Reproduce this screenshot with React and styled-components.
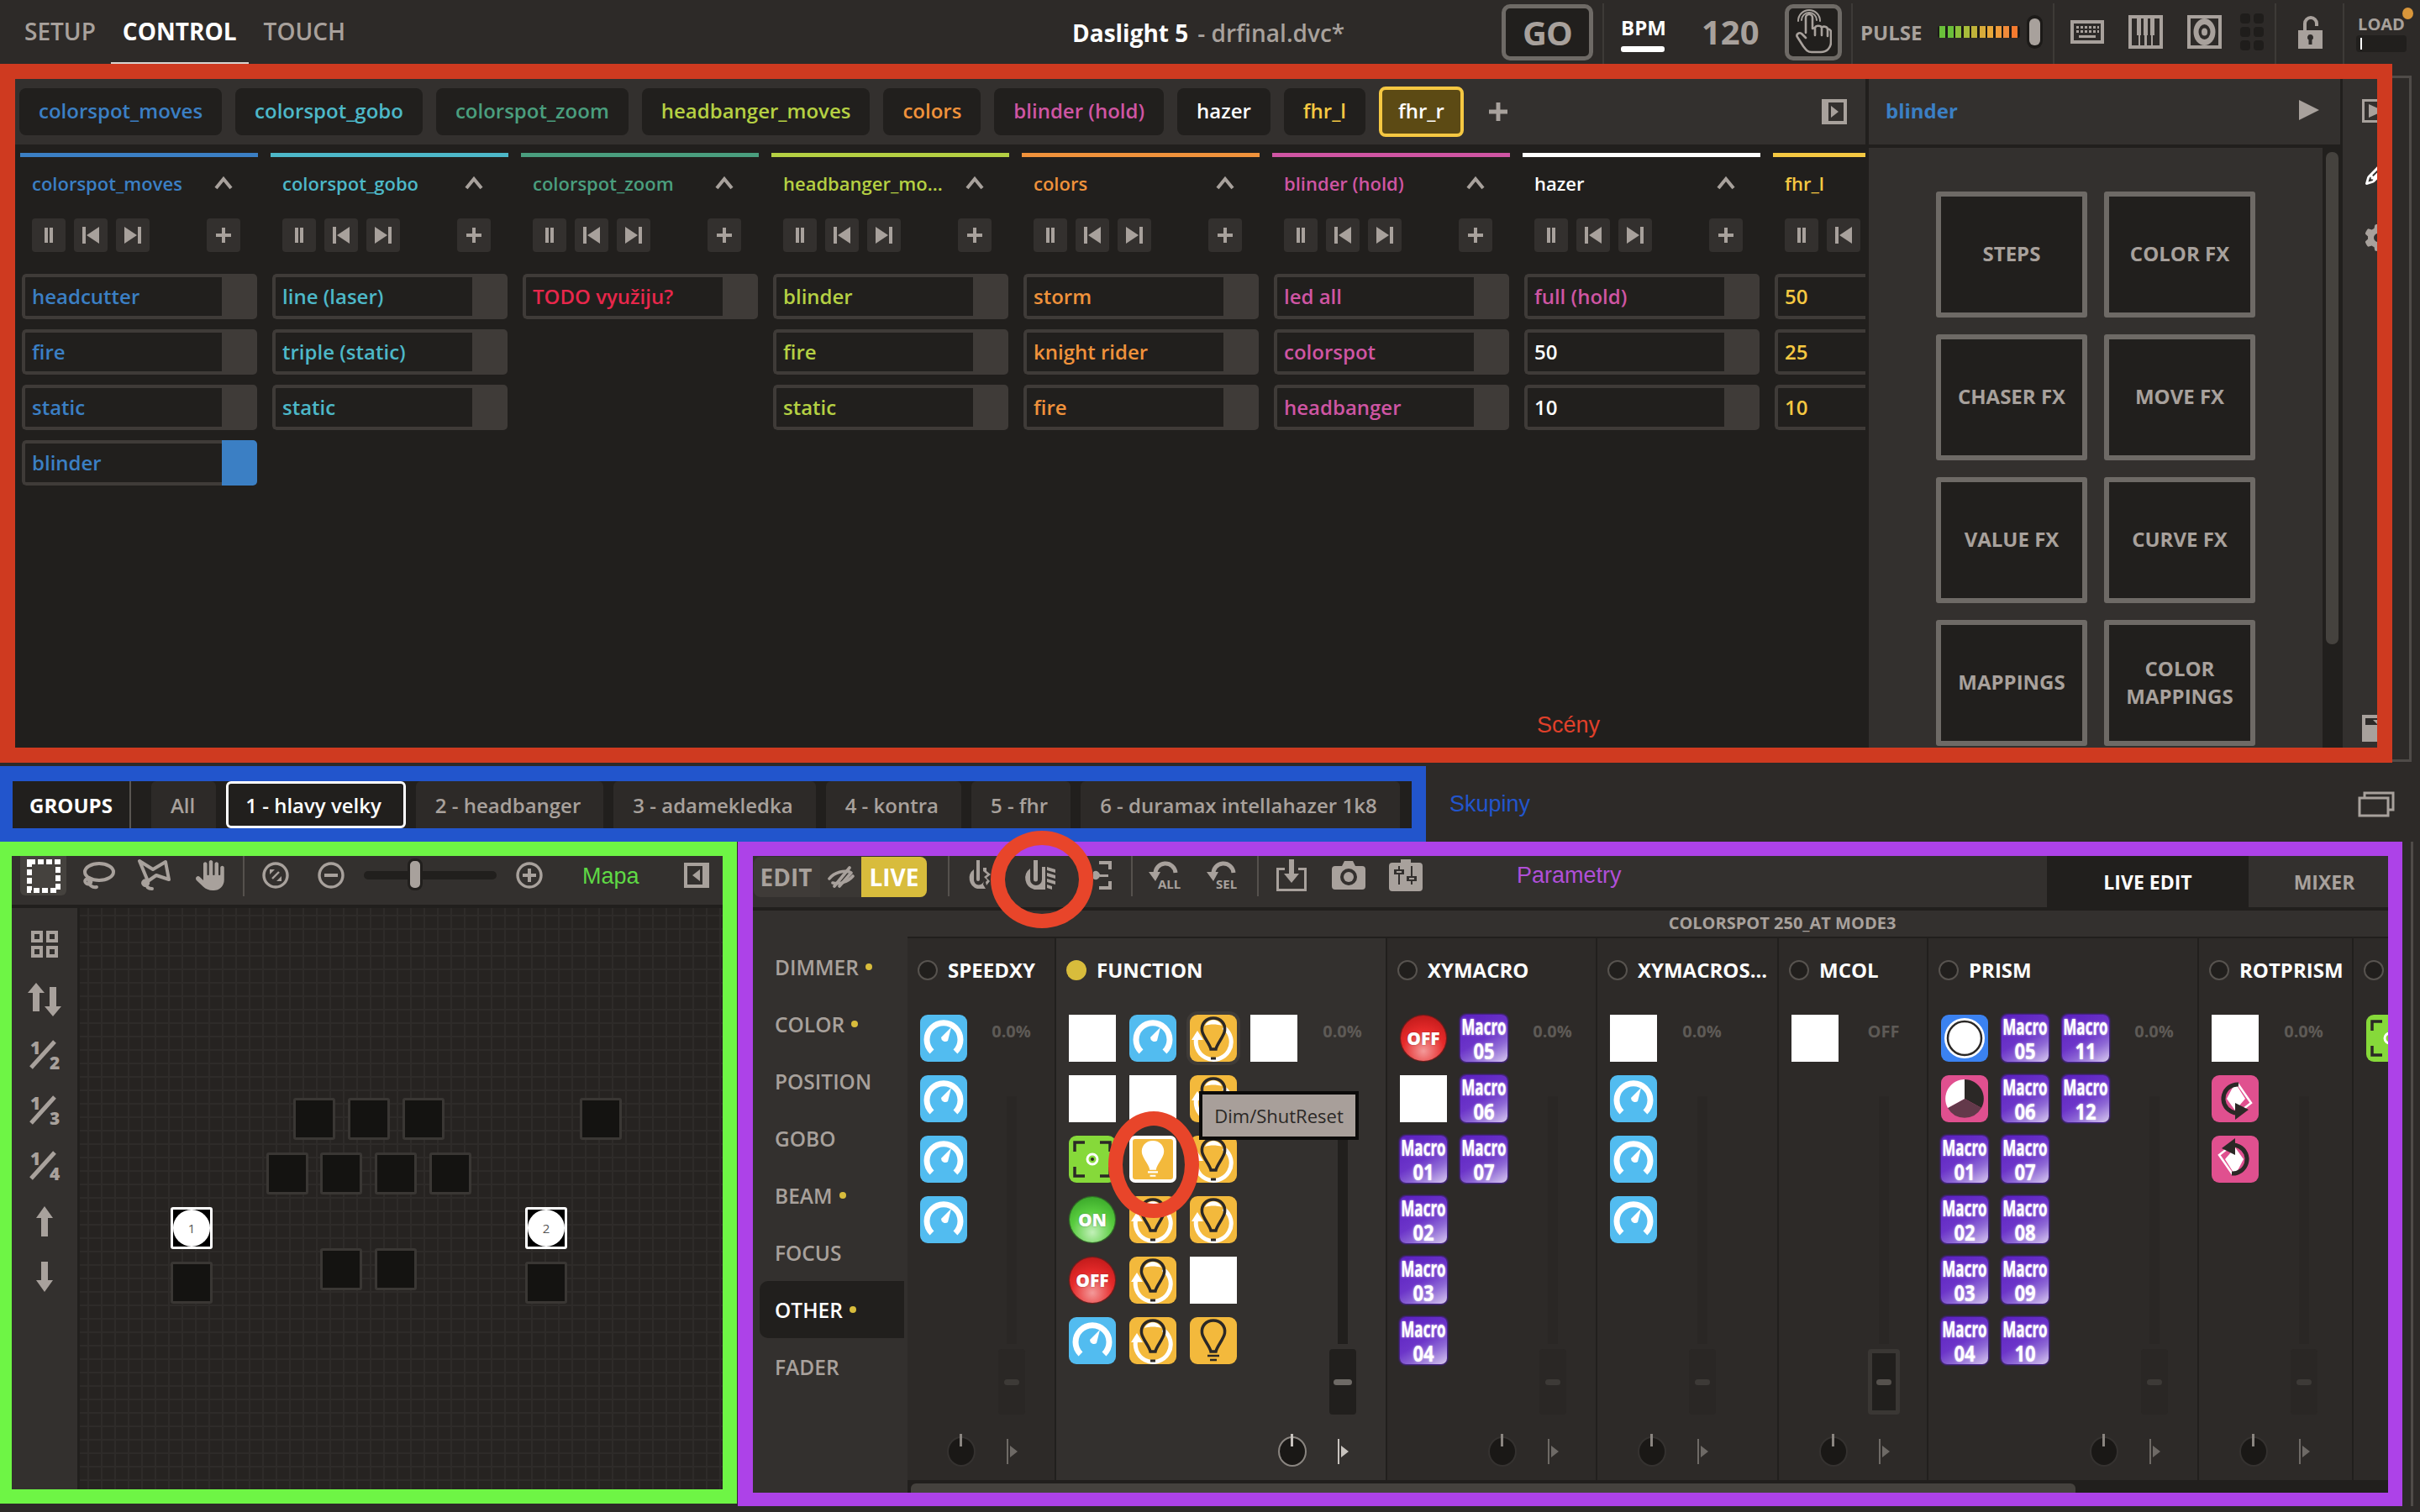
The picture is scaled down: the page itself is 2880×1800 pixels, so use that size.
import React from 'react';
import styled, { createGlobalStyle } from 'styled-components';
import { FaHand, FaGear, FaPencil } from 'react-icons/fa6';

const C = '#a8a19c';
const DARK = '#211f1d';
const MID = '#33302e';
const BASE = '#2d2a28';
const FONT = '"Open Sans", "Noto Sans", sans-serif';

const Global = createGlobalStyle`
  html, body { margin: 0; padding: 0; background: ${BASE}; }
  * { box-sizing: border-box; }
`;

const Page = styled.div`
  position: relative; width: 2880px; height: 1800px; overflow: hidden;
  background: ${BASE}; font-family: ${FONT}; color: ${C};
  display: flex; flex-direction: column;
`;

/* ---------- top bar ---------- */
const TopBar = styled.header`display: flex; height: 76px; flex: none; align-items: stretch;`;
const NavPart = styled.nav`flex: 0 0 1276px; display: flex; padding-left: 15px; gap: 4px;`;
const NavTab = styled.div`
  padding: 0 14px; height: 76px; line-height: 74px; font-size: 28px;
  font-weight: ${p => (p.$on ? 700 : 600)}; color: ${p => (p.$on ? '#fff' : C)};
  border-bottom: 2px solid ${p => (p.$on ? '#d8d4d0' : 'transparent')};
`;
const TitlePart = styled.div`flex: 0 0 511px; font-size: 28px; line-height: 78px; white-space: nowrap; color: ${C}; font-weight: 600;`;
const TitleStrong = styled.span`color: #fff; font-weight: 700;`;
const TitleFile = styled.span`font-size: 28px; margin-left: 11px;`;
const Slot = styled.div`
  flex: 0 0 ${p => p.$w}px; padding-left: ${p => p.$pl || 0}px;
  display: flex; align-items: center;
`;
const TopDivider = styled.div`flex: 0 0 2px; margin-top: 4px; background: #3d3a37;`;
const GoButton = styled.div`
  width: ${p => p.$w}px; height: 67px; border: 5px solid #6e6a66; border-radius: 10px; background: ${DARK};
  display: flex; align-items: center; justify-content: center; color: ${C};
  font-size: 40px; letter-spacing: -1px; font-weight: 700;
`;
const BpmBox = styled.div`display: flex; flex-direction: column; align-items: flex-start; gap: 4px;`;
const BpmLabel = styled.div`font-size: 24px; font-weight: 700; color: #fff; line-height: 36px;`;
const BpmBar = styled.div`width: 52px; height: 7px; border-radius: 3px; background: #fff;`;
const BpmValue = styled.div`font-size: 40px; font-weight: 700; color: ${C}; line-height: 1;`;
const PulseLabel = styled.div`font-size: 24px; font-weight: 700; color: ${C};`;
const Meter = styled.div`
  width: 98px; height: 14px; background: #1c1a18; border-radius: 3px; padding: 0 2px;
  display: flex; gap: 2.5px; align-items: stretch;
`;
const MeterBar = styled.span`flex: 0 0 7px; background: ${p => p.$c};`;
const MeterHandle = styled.div`
  width: 19px; height: 40px; margin-left: 8px; border-radius: 10px; background: #1c1a18;
  display: flex; padding: 4px 3px;
`;
const MeterHandleCore = styled.div`flex: 1; border-radius: 6px; background: ${C};`;
const LoadBox = styled.div`display: flex; flex-direction: column; align-items: stretch; width: 60px; margin-top: 3px;`;
const LoadLabel = styled.div`font-size: 20px; font-weight: 700; color: ${C}; line-height: 22px; text-align: center;`;
const LoadInput = styled.div`height: 20px; margin-top: 2px; background: ${DARK}; border-radius: 4px; padding: 3px 5px;`;
const Caret = styled.div`width: 2px; height: 14px; background: #fff;`;
const OrangeDot = styled.div`
  position: absolute; left: 2859px; top: 9px; width: 13px; height: 14px; border-radius: 50%; background: #d9963a;
`;

/* ---------- scenes section ---------- */
const ScenesRow = styled.div`display: flex; height: 832px; flex: none;`;
const RedFrame = styled.section`
  width: 2847px; height: 832px; border: 18px solid #cf3a20; display: flex; background: ${DARK}; overflow: hidden;
`;
const ScenesMain = styled.div`flex: 0 0 2202px; display: flex; flex-direction: column; min-width: 0;`;
const ScenesTabs = styled.div`
  height: 78px; flex: none; background: ${MID}; display: flex; align-items: center; gap: 16px; padding: 0 22px 0 5px;
`;
const SceneTab = styled.div`
  height: ${p => (p.$on ? 60 : 56)}px; padding: 0 ${p => (p.$on ? 19 : 23)}px 4px; border-radius: 8px;
  background: ${p => (p.$on ? '#5c4a14' : DARK)};
  border: ${p => (p.$on ? '4px solid #f5c842' : 'none')};
  color: ${p => (p.$on ? '#fff' : p.$c)}; font-size: 24px; font-weight: 600;
  display: flex; align-items: center; white-space: nowrap;
`;
const AddTab = styled.div`margin-left: 14px; display: flex;`;
const PushRight = styled.div`margin-left: auto; display: flex;`;
const Columns = styled.div`flex: 1; display: flex; gap: 15px; padding: 10px 0 0 6px; overflow: hidden;`;
const SceneColumn = styled.div`flex: 0 0 283px; display: flex; flex-direction: column;`;
const ColBar = styled.div`height: 5px; flex: none; background: ${p => p.$c};`;
const ColHead = styled.div`
  height: 62px; flex: none; margin-bottom: 11px; padding: 0 29px 0 14px; display: flex; align-items: center;
  justify-content: space-between; color: ${p => p.$c}; font-size: 22px; font-weight: 600;
`;
const Transport = styled.div`display: flex; gap: 10px; padding: 0 21px 0 14px; margin-bottom: 26px; flex: none;`;
const TransportBtn = styled.div`
  width: 40px; height: 40px; border-radius: 4px; background: ${MID};
  display: flex; align-items: center; justify-content: center;
  margin-left: ${p => (p.$end ? 'auto' : 0)};
`;
const CueList = styled.div`display: flex; flex-direction: column; gap: 12px; margin-left: 2px;`;
const CueRow = styled.div`display: flex; width: 280px; height: 54px; border-radius: 5px; overflow: hidden;`;
const CueName = styled.div`
  flex: 0 0 238px; border: 4px solid #3f3b38; border-right: 0; background: ${DARK}; padding-left: 8px;
  color: ${p => p.$c}; font-size: 24px; font-weight: 600; line-height: 45px; white-space: nowrap;
  border-radius: 5px 0 0 5px;
`;
const CueState = styled.div`flex: 1; background: ${p => p.$c || '#3f3b38'};`;

const InfoPanel = styled.aside`flex: 0 0 568px; display: flex; flex-direction: column; border-left: 4px solid ${DARK}; border-right: 3px solid ${DARK};`;
const InfoHead = styled.div`
  height: 78px; flex: none; background: ${MID}; display: flex; align-items: center; justify-content: space-between;
  padding: 0 25px 4px 20px; color: #3b7fc4; font-size: 24px; font-weight: 700;
`;
const InfoBody = styled.div`flex: 1; display: flex; margin-top: 4px; min-height: 0;`;
const FxArea = styled.div`
  flex: 0 0 540px; background: ${MID}; padding: 52px 0 0 80px; display: grid;
  grid-template-columns: 180px 180px; grid-auto-rows: 150px; gap: 20px; overflow: hidden; align-content: start;
`;
const FxButton = styled.div`
  border: 6px solid #6e6a66; border-radius: 3px; background: ${DARK}; color: ${C}; padding-bottom: 3px;
  display: flex; align-items: center; justify-content: center; text-align: center;
  font-size: 24px; font-weight: 700; line-height: 33px;
`;
const ScrollGutter = styled.div`flex: 1; background: ${DARK}; padding: 5px 2px 0 4px;`;
const ScrollThumb = styled.div`height: 586px; border-radius: 7px; background: #45423e;`;
const SideStrip = styled.div`
  flex: 1; background: ${MID}; overflow: hidden; display: flex; flex-direction: column;
  padding: 24px 0 7px 23px;
`;
const StripItem = styled.div`margin: ${p => p.$mt || 0}px 0 0 ${p => p.$ml || 0}px; width: 34px; flex: none; display: flex;`;
const Gutter = styled.div`
  flex: 0 0 23px; margin: 14px 0 1px 0; border: 3px solid #4f4b48; border-left: 0;
`;
const SideGutter = styled.div`flex: 0 0 13px; margin-bottom: 7px; border-right: 3px solid #4f4b48;`;
const FloatLabel = styled.div`
  position: absolute; left: ${p => p.$x}px; top: ${p => p.$y}px; color: ${p => p.$c};
  font: 27px "Liberation Sans", Arial, sans-serif;
`;

/* ---------- groups ---------- */
const GroupsRow = styled.div`display: flex; height: 90px; margin-top: 4px; flex: none; align-items: stretch;`;
const BlueFrame = styled.section`
  flex: 0 0 1697px; min-width: 0; border: solid #2255cc; border-width: 18px 17px 16px 15px; background: ${DARK}; display: flex; gap: 12px; overflow: hidden;
`;
const GroupsTitle = styled.div`
  flex: 0 0 141px; border-right: 2px solid #5a5652; margin-right: 12px; color: #fff; font-size: 24px; font-weight: 700;
  display: flex; align-items: center; justify-content: center;
`;
const GroupTab = styled.div`
  padding: 0 ${p => (p.$on ? 26 : p.$pr || 27)}px 0 ${p => (p.$on ? 20 : 23)}px;
  background: ${p => (p.$on ? DARK : BASE)}; color: ${p => (p.$on ? '#fff' : C)};
  border: ${p => (p.$on ? '3px solid #fff' : 'none')}; border-radius: 6px 6px ${p => (p.$on ? '6px 6px' : '0 0')};
  font-size: 24px; font-weight: 600; display: flex; align-items: center; white-space: nowrap;
`;
const SkupinyLabel = styled.div`margin-left: 28px; display: flex; align-items: center; color: #2255cc; font: 27px "Liberation Sans", Arial, sans-serif;`;
const WindowsIcon = styled.div`margin: 0 30px 0 auto; display: flex; align-items: center;`;

/* ---------- bottom ---------- */
const BottomRow = styled.div`display: flex; flex: none; height: 798px;`;
const GreenFrame = styled.section`
  flex: 0 0 877px; height: 788px; border: solid #6ef545; border-width: 17px 17px 17px 14px; margin-right: 1px;
  display: flex; flex-direction: column; background: ${DARK};
`;
const MapToolbar = styled.div`height: 62px; flex: none; display: flex; align-items: flex-start; background: ${MID}; border-bottom: 4px solid ${DARK};`;
const MapIcon = styled.div`
  flex: none; margin-left: ${p => p.$ml || 0}px; width: ${p => p.$w}px; height: 46px; display: flex; align-items: center; justify-content: center;
`;
const SelectWrap = styled.div`
  flex: none; margin-left: 10px; width: 55px; height: 47px; background: #45423e; border-radius: 0 0 6px 6px;
  display: flex; align-items: center; justify-content: center;
`;
const ToolDivider = styled.div`flex: none; margin-left: ${p => p.$ml}px; width: 2px; height: ${p => p.$h || 48}px; background: #55514d;`;
const ZoomSlider = styled.div`position: relative; flex: none; margin: 18px 0 0 23px; width: 158px; height: 10px; border-radius: 5px; background: ${DARK};`;
const ZoomHandle = styled.div`
  position: absolute; left: 52px; top: -15px; width: 18px; height: 38px; border-radius: 8px; background: ${C}; border: 3px solid ${DARK};
`;
const MapaLabel = styled.div`margin-left: 47px; margin-top: 9px; color: #5fd945; font: 27px "Liberation Sans", Arial, sans-serif;`;
const CollapseSlot = styled.div`margin: 8px 16px 0 auto; display: flex;`;
const MapBody = styled.div`flex: 1; display: flex; min-height: 0;`;
const MapSide = styled.div`flex: 0 0 78px; background: ${MID}; padding-top: 10px; display: flex; flex-direction: column; align-items: center;`;
const MapSideItem = styled.div`height: 66px; display: flex; align-items: center; justify-content: center; flex: none;`;
const FractionBox = styled.div`position: relative; width: 36px; height: 36px;`;
const FractionDigit = styled.span`
  position: absolute; font-size: 21px; font-weight: 800; line-height: 20px; color: ${C};
  left: ${p => (p.$den ? 24 : 1)}px; top: ${p => (p.$den ? 17 : -1)}px;
`;
const Canvas = styled.div`
  position: relative; flex: 1; margin-left: 3px; background-color: #262321;
  background-image: linear-gradient(to right, #2e2b29 2px, transparent 2px), linear-gradient(to bottom, #2e2b29 2px, transparent 2px);
  background-size: 16px 16px; background-position: 9px 8px;
`;
const Fixture = styled.div`
  position: absolute; width: 50px; height: 50px; border-radius: 3px;
  background: ${p => (p.$sel ? '#000' : '#141311')}; border: 3px solid ${p => (p.$sel ? '#fff' : '#3a3734')};
  display: flex; align-items: center; justify-content: center;
`;
const FixtureDot = styled.div`
  width: 44px; height: 44px; border-radius: 50%; background: #fff; color: #555; font-size: 15px;
  display: flex; align-items: center; justify-content: center;
`;

const PurpleFrame = styled.section`
  flex: 0 0 1981px; height: 791px; border: solid #ad42e8; border-width: 17px 17px 16px 18px; display: flex; flex-direction: column; background: ${MID}; overflow: hidden;
`;
const ParamToolbar = styled.div`height: 65px; flex: none; display: flex; align-items: flex-start; border-bottom: 4px solid ${DARK}; background: ${MID};`;
const ModeGroup = styled.div`
  flex: none; margin: 1px 0 0 1px; display: flex; height: 48px; border-radius: 8px; overflow: hidden; background: #3f3b38;
`;
const ModeBtn = styled.div`
  width: ${p => p.$w}px; height: 48px; display: flex; align-items: center; justify-content: center;
  font-size: 28px; font-weight: 700; margin-left: ${p => p.$ml || 0}px;
  background: ${p => p.$bg || 'transparent'}; color: ${p => p.$c || C};
`;
const ToolIcon = styled.div`flex: none; margin: 0 0 0 ${p => p.$ml}px; width: ${p => p.$w}px; height: 46px; display: flex; align-items: center; justify-content: center;`;
const UndoBox = styled.div`position: relative; width: 38px; height: 38px;`;
const UndoText = styled.span`position: absolute; left: 11px; top: 21px; font-size: 15px; line-height: 17px; font-weight: 700; color: ${C};`;
const ParamLabel = styled.div`margin: 8px 0 0 112px; color: #b04fd8; font: 27px "Liberation Sans", Arial, sans-serif;`;
const ViewTab = styled.div`
  flex: none; height: 61px; width: ${p => p.$w}px; margin-left: ${p => (p.$auto ? 'auto' : 0)};
  background: ${p => (p.$on ? DARK : 'transparent')}; color: ${p => (p.$on ? '#fff' : C)};
  display: flex; align-items: center; justify-content: center; padding-left: ${p => p.$pl || 0}px; font-size: 23px; font-weight: 700;
`;
const ParamBody = styled.div`flex: 1; display: flex; min-height: 0;`;
const ParamSide = styled.div`flex: 0 0 180px; padding-top: 33px; display: flex; flex-direction: column; background: ${MID};`;
const SideItem = styled.div`
  height: 68px; flex: none; display: flex; align-items: center; gap: 8px; font-size: 24.500px; font-weight: 600;
  margin-left: ${p => (p.$on ? 8 : 0)}px; padding-left: ${p => (p.$on ? 18 : 26)}px;
  background: ${p => (p.$on ? DARK : 'transparent')}; color: ${p => (p.$on ? '#fff' : C)};
  border-radius: ${p => (p.$on ? '10px 0 0 10px' : 0)};
`;
const SideDot = styled.span`width: 8px; height: 8px; border-radius: 50%; background: #d8bc3c;`;
const ParamMain = styled.div`flex: 1; min-width: 0; margin-left: 4px; display: flex; flex-direction: column;`;
const FixtureName = styled.div`
  height: 33px; flex: none; background: ${MID}; border-bottom: 2px solid ${DARK}; text-align: center; font-size: 20px; font-weight: 700; line-height: 30px; color: ${C}; padding-left: 320px;
`;
const Channels = styled.div`flex: 1; display: flex; overflow: hidden; min-height: 0;`;
const Channel = styled.div`
  flex: 0 0 ${p => p.$w}px; min-width: 0; display: flex; flex-direction: column; border-right: 2px solid ${DARK};
  background: ${p => (p.$active ? MID : BASE)};
`;
const ChannelHead = styled.div`
  height: 91px; flex: none; display: flex; align-items: center; padding: 0 0 16px 12px; gap: 12px;
  color: #fff; font-size: 24px; font-weight: 700; white-space: nowrap;
`;
const Radio = styled.span`
  width: 24px; height: 24px; border-radius: 50%; flex: none;
  background: ${p => (p.$on ? '#d8bc3c' : DARK)}; border: 2px solid ${p => (p.$on ? '#d8bc3c' : '#57534f')};
`;
const ChannelBody = styled.div`flex: 1; display: flex; min-height: 0; position: relative;`;
const BtnGrid = styled.div`
  flex: none; display: grid; grid-template-rows: repeat(6, 56px); grid-auto-columns: 56px;
  gap: 16px; padding-left: 15px; align-content: start;
`;
const BtnCell = styled.div`grid-column: ${p => p.$col}; grid-row: ${p => p.$row};`;
const FaderCol = styled.div`
  margin-left: auto; margin-right: ${p => p.$mr || 0}px; flex: 0 0 103px; display: flex; flex-direction: column; align-items: center; padding: 8px 0 6px;
`;
const FaderValue = styled.div`font-size: 20px; font-weight: 700; color: #5e5a56; line-height: 24px;`;
const FaderTrack = styled.div`
  flex: 1; width: 12px; margin-top: 65px; background: ${p => (p.$active ? DARK : '#2a2725')};
`;
const FaderCap = styled.div`
  flex: none; width: ${p => (p.$outline ? 38 : 32)}px; height: 78px; margin-top: 6px; border-radius: 4px;
  background: ${p => (p.$active || p.$outline ? DARK : '#2a2725')};
  border: ${p => (p.$outline ? '5px solid #3a3734' : 'none')};
  display: flex; align-items: center; justify-content: center;
`;
const FaderGrip = styled.div`
  width: ${p => (p.$active ? 22 : 18)}px; height: 7px; border-radius: 4px;
  background: ${p => (p.$active ? '#6e6a66' : p.$outline ? '#55514d' : '#3d3a37')};
`;
const KnobRow = styled.div`
  height: 72px; flex: none; display: flex; justify-content: flex-end; align-items: center; gap: 37px;
  padding: 4px ${p => 39 + (p.$mr || 0)}px 0 0;
`;
const Knob = styled.div`
  position: relative; width: 34px; height: 36px; border-radius: 50%; background: #1a1816; border: 2px solid ${p => (p.$active ? '#8a8580' : '#353230')};
`;
const KnobTick = styled.div`position: absolute; left: 13px; top: -5px; width: 3px; height: 15px; background: ${p => (p.$active ? '#c8c3be' : '#8a8580')};`;
const NudgeArrow = styled.div`display: flex; align-items: center; gap: 2px; width: 18px;`;
const NudgeLine = styled.div`width: 2px; height: 30px; background: ${p => (p.$active ? '#c8c3be' : '#6e6a66')};`;
const NudgeTri = styled.div`
  width: 0; height: 0; border-top: 7px solid transparent; border-bottom: 7px solid transparent;
  border-left: 9px solid ${p => (p.$active ? '#c8c3be' : '#6e6a66')};
`;
const HScroll = styled.div`height: 15px; flex: none; background: ${DARK}; padding: 4px 0 0 4px;`;
const HThumb = styled.div`width: 1386px; height: 11px; background: #45423e; border-radius: 6px 6px 0 0;`;

const Tile = styled.div`
  width: 56px; height: 56px; border-radius: ${p => p.$r ?? 9}px; background: ${p => p.$bg};
  box-shadow: ${p => (p.$hl ? '0 0 0 4px #3f3b38' : 'none')}; overflow: hidden; display: flex;
`;
const WhiteTile = styled.div`width: 56px; height: 56px; background: #fff;`;
const Lamp = styled.div`
  width: 54px; height: 54px; margin: 1px; border-radius: 50%; color: #fff; font-size: 21px; font-weight: 800;
  display: flex; align-items: center; justify-content: center;
  background: ${p => p.$bg}; box-shadow: 0 0 1px 1px ${p => p.$edge};
  text-shadow: 0 0 2px rgba(0,0,0,.35);
`;
const MacroTile = styled.div`
  width: 56px; height: 56px; border-radius: 7px; color: #fff; display: flex; flex-direction: column; align-items: center;
  background: linear-gradient(150deg, #5a1fc0 0%, #6c35c9 50%, #8f6ad6 72%, #d8c9ef 100%);
  box-shadow: 0 0 2px 1px #4e1fa8; font-weight: 700; white-space: nowrap;
  text-shadow: 0 0 2px rgba(255,255,255,.85);
`;
const MacroWord = styled.span`font-size: 17px; line-height: 16px; margin-top: 6px; transform: scaleY(1.6);`;
const MacroNum = styled.span`font-size: 22px; line-height: 20px; margin-top: 10px; transform: scaleY(1.2);`;

const RingMark = styled.div`
  position: absolute; left: ${p => p.$x}px; top: ${p => p.$y}px; width: ${p => p.$w}px; height: ${p => p.$h}px;
  border: 17px solid #e8452a; border-radius: 50%;
`;
const Tooltip = styled.div`
  position: absolute; left: 1427px; top: 1299px; width: 190px; height: 58px; background: #a89f9a;
  border: 4px solid #0c0b0a; color: #2b2826; font-size: 22px; display: flex; align-items: center; justify-content: center;
`;

/* ---------- drawn icons ---------- */
const Pause = () => <svg width="16" height="20" viewBox="0 0 16 20"><path fill={C} d="M3 1h4v18H3zM9 1h4v18H9z" /></svg>;
const Prev = () => <svg width="20" height="20" viewBox="0 0 20 20"><path fill={C} d="M0 0h4v20H0zM5 10 20 0v20z" /></svg>;
const Next = () => <svg width="20" height="20" viewBox="0 0 20 20"><path fill={C} d="M16 0h4v20h-4zM15 10 0 0v20z" /></svg>;
const Plus = ({ s = 18 }) => <svg width={s} height={s} viewBox="0 0 18 18"><path fill={C} d="M7 0h4v7h7v4h-7v7H7v-7H0V7h7z" /></svg>;
const Chevron = () => <svg width="24" height="16" viewBox="0 0 24 16"><path fill="none" stroke={C} strokeWidth="4" d="M3 14 12 3l9 11" /></svg>;
const PanelCollapse = ({ flip, w = 30 }) => (
  <svg width={w} height={w} viewBox="0 0 30 30" style={flip ? { transform: 'scaleX(-1)' } : undefined}>
    <path fill={C} fillRule="evenodd" d="M0 0h30v30H0zM8 4v22h18V4z" />
    <path fill={C} d="M11 8l9 7-9 7z" />
  </svg>
);
const HandPoint = () => (
  <svg width="44" height="54" viewBox="0 0 44 54" fill="none" stroke={C} strokeWidth="2.6" strokeLinejoin="round" strokeLinecap="round">
    <path d="M13 28V10a4 4 0 0 1 8 0v13l3-1c1-3 7-3 8 0 1-2 7-2 7 2 2-1 4 1 4 3v12c0 7-5 12-12 12H20c-5 0-7-3-10-7L3 33c-2-3 2-6 5-4l5 5" />
    <path d="M24 23v8M32 23v8M39 25v7" />
    <path d="M8 13a9 9 0 0 1 18 0M4 14a13 13 0 0 1 26 0" strokeWidth="2" />
  </svg>
);
const KeyboardIcon = () => (
  <svg width="40" height="28" viewBox="0 0 40 28">
    <path fill={C} fillRule="evenodd" d="M0 0h40v28H0zM4 4v20h32V4z" />
    <path fill={C} d="M7 7h3v3H7zM12 7h3v3h-3zM17 7h3v3h-3zM22 7h3v3h-3zM27 7h3v3h-3zM32 7h2v3h-2zM7 12h3v3H7zM12 12h3v3h-3zM17 12h3v3h-3zM22 12h3v3h-3zM27 12h3v3h-3zM32 12h2v3h-2zM10 18h20v3H10z" />
  </svg>
);
const PianoIcon = () => (
  <svg width="41" height="40" viewBox="0 0 41 40">
    <path fill={C} fillRule="evenodd" d="M0 0h41v40H0zM4 4v32h8V24h-2V4zM15 4v20h-1v12h5V24h-1V4zM23 4v20h-1v12h5V24h-1V4zM31 4v20h-2v12h8V4z" />
  </svg>
);
const SpeakerIcon = () => (
  <svg width="41" height="40" viewBox="0 0 41 40">
    <path fill={C} fillRule="evenodd" d="M0 0h41v40H0zM4 4v32h33V4z" />
    <ellipse cx="20.500" cy="20" rx="13" ry="16" fill={C} />
    <ellipse cx="20.500" cy="20" rx="7" ry="9" fill={BASE} />
    <ellipse cx="20.500" cy="20" rx="3.500" ry="4.500" fill={C} />
  </svg>
);
const DotsIcon = () => (
  <svg width="28" height="44" viewBox="0 0 28 44" fill="#1f1d1b">
    {[0, 16, 32].map(y => [0, 16].map(x => <rect key={x + '-' + y} x={x} y={y} width="12" height="12" rx="4" />))}
  </svg>
);
const LockIcon = () => (
  <svg width="29" height="40" viewBox="0 0 29 40">
    <path fill="none" stroke={C} strokeWidth="4" d="M8 18V10a7 7 0 0 1 14 0v3" />
    <path fill={C} fillRule="evenodd" d="M0 18h29v22H0zM14.500 23a3.500 3.500 0 0 0-2 6.400V35h4v-5.600a3.500 3.500 0 0 0-2-6.400z" />
  </svg>
);
const StripPlay = () => (
  <svg width="34" height="28" viewBox="0 0 34 28">
    <path fill={C} fillRule="evenodd" d="M0 0h34v28H0zM3 3v22h28V3z" />
    <path fill={C} d="M8 6l18 8-18 8z" />
  </svg>
);
const StripDown = () => (
  <svg width="34" height="32" viewBox="0 0 34 32">
    <path fill={C} d="M0 0h34v32H0z" />
    <path fill={BASE} d="M4 4h26v8H4z" />
    <path fill={C} d="M13 6h18l-9 9z" />
  </svg>
);
const WindowsGlyph = () => (
  <svg width="44" height="31" viewBox="0 0 44 31" fill="none" stroke={C} strokeWidth="3">
    <rect x="2" y="8" width="34" height="21" />
    <path d="M8 8V2h34v20h-6" />
  </svg>
);
const GridIcon = () => (
  <svg width="32" height="32" viewBox="0 0 32 32">
    {[0, 18].map(x => [0, 18].map(y => (
      <path key={x + '' + y} fill={C} fillRule="evenodd" d={`M${x} ${y}h14v14h-14zM${x + 4} ${y + 4}v6h6v-6z`} />
    )))}
  </svg>
);
const SwapIcon = () => (
  <svg width="40" height="40" viewBox="0 0 40 40" fill={C}>
    <path d="M0 12 10 0l10 12h-6v22H6V12zM20 28h6V5h8v23h6L30 40z" />
  </svg>
);
const Fraction = ({ d }) => (
  <FractionBox>
    <FractionDigit>1</FractionDigit>
    <FractionDigit $den>{d}</FractionDigit>
    <svg width="36" height="36" viewBox="0 0 36 36"><path stroke={C} strokeWidth="5" d="M2 33 30 2" /></svg>
  </FractionBox>
);
const ArrowUp = () => <svg width="20" height="36" viewBox="0 0 20 36" fill={C}><path d="M10 0l10 14h-6v22H6V14H0z" /></svg>;
const ArrowDown = () => <svg width="20" height="36" viewBox="0 0 20 36" fill={C}><path d="M10 36 0 22h6V0h8v22h6z" /></svg>;
const SelectIcon = () => (
  <svg width="40" height="40" viewBox="0 0 40 40"><rect x="3" y="3" width="34" height="34" fill="none" stroke="#fff" strokeWidth="6" strokeDasharray="7 3" /></svg>
);
const LassoIcon = () => (
  <svg width="40" height="34" viewBox="0 0 40 34" fill="none" stroke={C} strokeWidth="4" strokeLinecap="round">
    <ellipse cx="21" cy="13" rx="17" ry="10" />
    <path d="M10 22c-4-2-7 1-5 4 2 3 8 1 6-3l-2-3M9 24c0 5 4 8 9 7" />
  </svg>
);
const PolyIcon = () => (
  <svg width="40" height="38" viewBox="0 0 40 38" fill="none" stroke={C} strokeWidth="4" strokeLinejoin="round" strokeLinecap="round">
    <path d="M2 2l16 10L33 3l4 21-15-5-10 7z" />
    <path d="M11 26c-4-2-6 2-4 4 2 2 6 0 5-3l-1-2M10 28c0 4 2 7 7 7" />
  </svg>
);
const CircleArrows = () => (
  <svg width="32" height="32" viewBox="0 0 32 32" fill="none" stroke={C} strokeWidth="3.400">
    <circle cx="16" cy="16" r="14" />
    <path d="M12 20l8-8" strokeWidth="2.400" />
    <path d="M9 9h6l-6 6zM23 23h-6l6-6z" fill={C} stroke="none" />
  </svg>
);
const CircleMinus = () => (
  <svg width="32" height="32" viewBox="0 0 32 32" fill="none" stroke={C} strokeWidth="3.400">
    <circle cx="16" cy="16" r="14" /><path d="M8 16h16" strokeWidth="4" />
  </svg>
);
const CirclePlus = () => (
  <svg width="32" height="32" viewBox="0 0 32 32" fill="none" stroke={C} strokeWidth="3.400">
    <circle cx="16" cy="16" r="14" /><path d="M8 16h16M16 8v16" strokeWidth="4" />
  </svg>
);
const EyeOffIcon = () => (
  <svg width="32" height="26" viewBox="0 0 32 26" fill="none" stroke={C} strokeWidth="3.600" strokeLinecap="round">
    <path d="M2 15c6-8 18-10 24-8M6 20c8 2 18-1 24-8" />
    <path d="M8 24 26 2M14 24 28 8" />
  </svg>
);
const DimA = () => (
  <svg width="32" height="38" viewBox="0 0 32 38" fill={C}>
    <path d="M10 12v12a6 6 0 0 0 12 1l-1 5 3 5H14A13 13 0 0 1 10 12z" />
    <path d="M13 1h4v23a2 2 0 0 1-4 0z" />
    <path d="M21 10h4v4l5 4-5 4 4 4-4 5-1-4 2-2-4-4 4-3-5-4z" />
  </svg>
);
const DimB = () => (
  <svg width="40" height="38" viewBox="0 0 40 38" fill={C}>
    <path d="M9 11v13a7 7 0 0 0 14 0V9h4v27H14A14 14 0 0 1 9 11z" />
    <path d="M13 1h5v23a2.500 2.500 0 0 1-5 0z" />
    <path d="M29 9l10 3v4l-10-3zM29 16l10 3v4l-10-3zM29 23l10 3v4l-10-3zM29 30l6 2v4l-6-2z" />
  </svg>
);
const DimC = () => (
  <svg width="24" height="34" viewBox="0 0 24 34" fill={C}>
    <path d="M9 0h15v10h-4V4H9zM20 24h4v10H9v-4h11zM2 13a5 5 0 1 1 0 8zM10 16h10v3H10z" />
  </svg>
);
const UndoLabel = ({ t }) => (
  <UndoBox>
    <svg width="38" height="30" viewBox="0 0 38 30">
      <path fill="none" stroke={C} strokeWidth="5" d="M8 18a12 12 0 0 1 24-2" />
      <path fill={C} d="M0 15h14l-6 11z" />
    </svg>
    <UndoText>{t}</UndoText>
  </UndoBox>
);
const SaveIcon = () => (
  <svg width="36" height="38" viewBox="0 0 36 38" fill={C}>
    <path d="M0 10h10v3H3v22h30V13h-7v-3h10v28H0z" />
    <path d="M15 0h6v17h6L18 28 9 17h6z" />
  </svg>
);
const CameraIcon = () => (
  <svg width="40" height="34" viewBox="0 0 40 34">
    <path fill={C} d="M4 6h8l3-6h10l3 6h8a4 4 0 0 1 4 4v20a4 4 0 0 1-4 4H4a4 4 0 0 1-4-4V10a4 4 0 0 1 4-4z" />
    <circle cx="20" cy="19" r="10" fill={MID} /><circle cx="20" cy="19" r="6" fill={C} />
  </svg>
);
const MixerIcon = () => (
  <svg width="40" height="38" viewBox="0 0 40 38">
    <path fill={C} d="M14 0h12v4h10a4 4 0 0 1 4 4v26a4 4 0 0 1-4 4H4a4 4 0 0 1-4-4V8a4 4 0 0 1 4-4h10z" />
    <path fill={MID} d="M11 8h2v22h-2zM26 8h2v22h-2zM6 12h12v6H6zM21 20h12v6H21z" />
    <path fill={C} d="M9 14h6v2H9zM24 22h6v2h-6z" />
  </svg>
);

const BULB = 'M28 4C19 4 13.500 11 14.500 19 15.500 26 24 35 25 41h6c1-6 9.500-15 10.500-22C42.500 11 37 4 28 4z';
const SpeedGlyph = () => (
  <svg width="56" height="56" viewBox="0 0 56 56">
    <path fill="none" stroke="#fff" strokeWidth="7" d="M14 44a20 20 0 1 1 28 0" />
    <path fill="#fff" d="M37 15 33 31a5 5 0 0 1-8-4z" />
  </svg>
);
const LoopBulbGlyph = () => (
  <svg width="56" height="56" viewBox="0 0 56 56">
    <path fill="none" stroke="#fff" strokeWidth="5" d="M9 24a21 21 0 1 0 31-9" />
    <path fill="#fff" d="M2 30l7-11 7 11z" />
    <path fill="#fff" d="M18 13c4-9 16-9 20 0-6-2-14-2-20 0z" />
    <path d={BULB} fill="none" stroke="#2b2826" strokeWidth="3.500" />
    <path stroke="#2b2826" strokeWidth="3" d="M25 52h6" />
  </svg>
);
const BulbGlyph = ({ fill = 'none', stroke = '#2b2826' }) => (
  <svg width="56" height="56" viewBox="0 0 56 56">
    <path d={BULB} fill={fill} stroke={stroke} strokeWidth="3.500" />
    <path stroke={stroke} strokeWidth="2.500" d="M21 46h14M24 51h8" />
  </svg>
);
const TargetGlyph = () => (
  <svg width="56" height="56" viewBox="0 0 56 56">
    <path fill="none" stroke="#2b2826" strokeWidth="3.500" d="M7 19V8h12M37 8h12v11M49 37v11H37M19 48H7V37" />
    <circle cx="28" cy="28" r="6" fill="none" stroke="#fff" strokeWidth="3" />
    <circle cx="28" cy="28" r="2" fill="#2b2826" />
  </svg>
);
const CircleGlyph = () => (
  <svg width="56" height="56" viewBox="0 0 56 56">
    <circle cx="28" cy="28" r="24" fill="#fff" /><circle cx="28" cy="28" r="20" fill="#fff" stroke="#2b2826" strokeWidth="2.500" />
  </svg>
);
const PieGlyph = () => (
  <svg width="56" height="56" viewBox="0 0 56 56">
    <path fill="#2b2826" d="M28 28V5a23 23 0 0 1 20 34z" />
    <path fill="#63394a" d="M28 28l20 11a23 23 0 0 1-40 0z" />
    <path fill="#fff" d="M28 28 8 39A23 23 0 0 1 28 5z" />
  </svg>
);
const RotGlyph = ({ flip }) => (
  <svg width="56" height="56" viewBox="0 0 56 56" style={flip ? { transform: 'rotate(180deg)' } : undefined}>
    <path fill="#fff" d="M28 9l12 19-12 14-10-14z" />
    <path fill="none" stroke="#fff" strokeWidth="2.500" d="M31 10l16 23-9 7" />
    <path fill="none" stroke="#2b2826" strokeWidth="5" d="M32 11a17 17 0 0 0-9 32 17 17 0 0 0 11 2" />
    <path fill="#2b2826" d="M28 33l16 8-16 12z" />
  </svg>
);

const SelectedInner = styled.div`
  width: 56px; height: 56px; border-radius: 7px; border: 4px solid #fff; background: #f3b93c; overflow: hidden; display: flex; align-items: center; justify-content: center;
`;
const SelectedTile = () => <SelectedInner><BulbGlyph fill="#fff" stroke="#fff" /></SelectedInner>;

const renderBtn = k => {
  if (k === 'w') return <WhiteTile />;
  if (k === 's') return <Tile $bg="#52bcf0"><SpeedGlyph /></Tile>;
  if (k === 'l') return <Tile $bg="#f3b93c"><LoopBulbGlyph /></Tile>;
  if (k === 'L') return <Tile $bg="#f3b93c" $hl><LoopBulbGlyph /></Tile>;
  if (k === 'b') return <Tile $bg="#f3b93c"><BulbGlyph /></Tile>;
  if (k === 'B') return <SelectedTile />;
  if (k === 't') return <Tile $bg="#86d93a"><TargetGlyph /></Tile>;
  if (k === 'on') return <Lamp $edge="#2e7d22" $bg="radial-gradient(circle at 50% 78%, #c2f0b8 0%, #58cc3e 50%, #2f9a22 100%)">ON</Lamp>;
  if (k === 'off') return <Lamp $edge="#8a1515" $bg="radial-gradient(circle at 50% 78%, #f39a9a 0%, #e62a2a 50%, #b21414 100%)">OFF</Lamp>;
  if (k === 'c') return <Tile $bg="#3b82f0"><CircleGlyph /></Tile>;
  if (k === 'p') return <Tile $bg="#e0508f"><PieGlyph /></Tile>;
  if (k === 'r') return <Tile $bg="#e0508f"><RotGlyph /></Tile>;
  if (k === 'R') return <Tile $bg="#e0508f"><RotGlyph flip /></Tile>;
  return <MacroTile><MacroWord>Macro</MacroWord><MacroNum>{k}</MacroNum></MacroTile>;
};

/* ---------- data ---------- */
const SCENES = [
  { t: 'colorspot_moves', c: '#3b7fc4', cues: ['headcutter', 'fire', 'static', 'blinder'] },
  { t: 'colorspot_gobo', c: '#4db8c8', cues: ['line (laser)', 'triple (static)', 'static'] },
  { t: 'colorspot_zoom', c: '#4a9e7e', cues: [{ n: 'TODO využiju?', c: '#e8274b' }] },
  { t: 'headbanger_moves', h: 'headbanger_mo...', c: '#b5d043', cues: ['blinder', 'fire', 'static'] },
  { t: 'colors', c: '#f0923b', cues: ['storm', 'knight rider', 'fire'] },
  { t: 'blinder (hold)', c: '#cf55a3', cues: ['led all', 'colorspot', 'headbanger'] },
  { t: 'hazer', c: '#ffffff', cues: [{ n: 'full (hold)', c: '#cf55a3' }, '50', '10'] },
  { t: 'fhr_l', c: '#f5c842', cues: ['50', '25', '10'] },
];
const FX = ['STEPS', 'COLOR FX', 'CHASER FX', 'MOVE FX', 'VALUE FX', 'CURVE FX', 'MAPPINGS', 'COLOR MAPPINGS'];
const GROUPS = [
  { t: 'All', pr: 25 }, { t: '1 - hlavy velky', on: true }, { t: '2 - headbanger' }, { t: '3 - adamekledka' },
  { t: '4 - kontra' }, { t: '5 - fhr' }, { t: '6 - duramax intellahazer 1k8' },
];
const CANVAS_X = 95, CANVAS_Y = 1081;
const FIXTURES = [
  [374, 1332], [439, 1332], [504, 1332], [715, 1332],
  [342, 1397], [406, 1397], [471, 1397], [536, 1397],
  [228, 1462, 1], [650, 1462, 2],
  [406, 1511], [471, 1511], [228, 1527], [650, 1527],
];
const SIDE = [['DIMMER', 1], ['COLOR', 1], ['POSITION'], ['GOBO'], ['BEAM', 1], ['FOCUS'], ['OTHER', 1, 1], ['FADER']];
const CHANNELS = [
  { n: 'SPEEDXY', w: 177, cols: [['s', 's', 's', 's']], v: '0.0%' },
  { n: 'FUNCTION', w: 394, on: true, cols: [['w', 'w', 't', 'on', 'off', 's'], ['s', 'w', 'B', 'l', 'l', 'l'], ['L', 'l', 'l', 'l', 'w', 'b'], ['w']], v: '0.0%' },
  { n: 'XYMACRO', w: 250, cols: [['off', 'w', '01', '02', '03', '04'], ['05', '06', '07']], v: '0.0%' },
  { n: 'XYMACROS...', w: 216, mr: 38, cols: [['w', 's', 's', 's']], v: '0.0%' },
  { n: 'MCOL', w: 178, outline: true, cols: [['w']], v: 'OFF' },
  { n: 'PRISM', w: 322, cols: [['c', 'p', '01', '02', '03', '04'], ['05', '06', '07', '08', '09', '10'], ['11', '12']], v: '0.0%' },
  { n: 'ROTPRISM', w: 184, mr: 6, cols: [['w', 'r', 'R']], v: '0.0%' },
  { n: '', w: 60, cols: [['t']], last: true },
];
const METER = ['#6abf3a', '#6abf3a', '#8cbf3a', '#a8bc3a', '#c0b33a', '#d8ab3a', '#e8a83a', '#ee9b3a', '#f08a3a', '#f57a2f'];

const ScenesColumn = ({ s }) => (
  <SceneColumn>
    <ColBar $c={s.c} />
    <ColHead $c={s.c}><span>{s.h || s.t}</span><Chevron /></ColHead>
    <Transport>
      <TransportBtn><Pause /></TransportBtn>
      <TransportBtn><Prev /></TransportBtn>
      <TransportBtn><Next /></TransportBtn>
      <TransportBtn $end><Plus /></TransportBtn>
    </Transport>
    <CueList>
      {s.cues.map((q, i) => {
        const name = typeof q === 'string' ? q : q.n;
        const col = typeof q === 'string' ? s.c : q.c;
        return (
          <CueRow key={i}>
            <CueName $c={col}>{name}</CueName>
            <CueState $c={name === 'blinder' && s.t === 'colorspot_moves' ? '#3b7fc4' : undefined} />
          </CueRow>
        );
      })}
    </CueList>
  </SceneColumn>
);

const ParamChannel = ({ c }) => (
  <Channel $w={c.w} $active={c.on}>
    <ChannelHead><Radio $on={c.on} />{c.n}</ChannelHead>
    <ChannelBody>
      <BtnGrid>
        {c.cols.map((col, i) => col.map((k, j) => (
          <BtnCell key={i + '-' + j} $col={i + 1} $row={j + 1}>{renderBtn(k)}</BtnCell>
        )))}
      </BtnGrid>
      {!c.last && (
        <FaderCol $mr={c.mr}>
          <FaderValue>{c.v}</FaderValue>
          <FaderTrack $active={c.on} />
          <FaderCap $active={c.on} $outline={c.outline}><FaderGrip $active={c.on} $outline={c.outline} /></FaderCap>
        </FaderCol>
      )}
    </ChannelBody>
    {!c.last ? (
      <KnobRow $mr={c.mr}>
        <Knob $active={c.on}><KnobTick $active={c.on} /></Knob>
        <NudgeArrow><NudgeLine $active={c.on} /><NudgeTri $active={c.on} /></NudgeArrow>
      </KnobRow>
    ) : <KnobRow />}
  </Channel>
);

export default function App() {
  return (
    <Page>
      <Global />
      <TopBar>
        <NavPart>
          <NavTab>SETUP</NavTab>
          <NavTab $on>CONTROL</NavTab>
          <NavTab>TOUCH</NavTab>
        </NavPart>
        <TitlePart><TitleStrong>Daslight 5</TitleStrong><TitleFile>- drfinal.dvc*</TitleFile></TitlePart>
        <Slot $w={120}><GoButton $w={109}>GO</GoButton></Slot>
        <TopDivider />
        <Slot $w={116} $pl={20}><BpmBox><BpmLabel>BPM</BpmLabel><BpmBar /></BpmBox></Slot>
        <Slot $w={99}><BpmValue>120</BpmValue></Slot>
        <Slot $w={79}><GoButton $w={68}><HandPoint /></GoButton></Slot>
        <TopDivider />
        <Slot $w={101} $pl={9}><PulseLabel>PULSE</PulseLabel></Slot>
        <Slot $w={137}>
          <Meter>{METER.map((c, i) => <MeterBar key={i} $c={c} />)}</Meter>
          <MeterHandle><MeterHandleCore /></MeterHandle>
        </Slot>
        <TopDivider />
        <Slot $w={88} $pl={19}><KeyboardIcon /></Slot>
        <Slot $w={70}><PianoIcon /></Slot>
        <Slot $w={63}><SpeakerIcon /></Slot>
        <Slot $w={41}><DotsIcon /></Slot>
        <TopDivider />
        <Slot $w={79} $pl={26}><LockIcon /></Slot>
        <TopDivider />
        <Slot $w={90} $pl={14}>
          <LoadBox><LoadLabel>LOAD</LoadLabel><LoadInput><Caret /></LoadInput></LoadBox>
        </Slot>
      </TopBar>
      <OrangeDot />

      <ScenesRow>
        <RedFrame>
          <ScenesMain>
            <ScenesTabs>
              {SCENES.map(s => <SceneTab key={s.t} $c={s.c}>{s.t}</SceneTab>)}
              <SceneTab $on $c="#fff">fhr_r</SceneTab>
              <AddTab><Plus s={22} /></AddTab>
              <PushRight><PanelCollapse /></PushRight>
            </ScenesTabs>
            <Columns>
              {SCENES.map(s => <ScenesColumn key={s.t} s={s} />)}
            </Columns>
          </ScenesMain>
          <InfoPanel>
            <InfoHead>
              blinder
              <svg width="24" height="24" viewBox="0 0 24 24"><path fill={C} d="M0 0l24 12L0 24z" /></svg>
            </InfoHead>
            <InfoBody>
              <FxArea>{FX.map(f => <FxButton key={f}>{f}</FxButton>)}</FxArea>
              <ScrollGutter><ScrollThumb /></ScrollGutter>
            </InfoBody>
          </InfoPanel>
          <SideStrip>
            <StripItem><StripPlay /></StripItem>
            <StripItem $mt={44} $ml={4}><FaPencil color="#fff" size={30} /></StripItem>
            <StripItem $mt={47} $ml={3}><FaGear color={C} size={32} /></StripItem>
            <StripItem $mt={552}><StripDown /></StripItem>
          </SideStrip>
        </RedFrame>
        <Gutter />
      </ScenesRow>
      <FloatLabel $x={1829} $y={848} $c="#e0402a">Scény</FloatLabel>

      <GroupsRow>
        <BlueFrame>
          <GroupsTitle>GROUPS</GroupsTitle>
          {GROUPS.map(g => <GroupTab key={g.t} $on={g.on} $pr={g.pr}>{g.t}</GroupTab>)}
        </BlueFrame>
        <SkupinyLabel>Skupiny</SkupinyLabel>
        <WindowsIcon><WindowsGlyph /></WindowsIcon>
      </GroupsRow>

      <BottomRow>
        <GreenFrame>
          <MapToolbar>
            <SelectWrap><SelectIcon /></SelectWrap>
            <MapIcon $ml={18} $w={40}><LassoIcon /></MapIcon>
            <MapIcon $ml={26} $w={42}><PolyIcon /></MapIcon>
            <MapIcon $ml={27} $w={38}><FaHand color={C} size={36} /></MapIcon>
            <ToolDivider $ml={19} />
            <MapIcon $ml={21} $w={32}><CircleArrows /></MapIcon>
            <MapIcon $ml={34} $w={32}><CircleMinus /></MapIcon>
            <ZoomSlider><ZoomHandle /></ZoomSlider>
            <MapIcon $ml={23} $w={32}><CirclePlus /></MapIcon>
            <MapaLabel>Mapa</MapaLabel>
            <CollapseSlot><PanelCollapse flip /></CollapseSlot>
          </MapToolbar>
          <MapBody>
            <MapSide>
              <MapSideItem><GridIcon /></MapSideItem>
              <MapSideItem><SwapIcon /></MapSideItem>
              <MapSideItem><Fraction d="2" /></MapSideItem>
              <MapSideItem><Fraction d="3" /></MapSideItem>
              <MapSideItem><Fraction d="4" /></MapSideItem>
              <MapSideItem><ArrowUp /></MapSideItem>
              <MapSideItem><ArrowDown /></MapSideItem>
            </MapSide>
            <Canvas>
              {FIXTURES.map(([x, y, n], i) => (
                <Fixture key={i} $sel={!!n} style={{ left: x - 25 - CANVAS_X, top: y - 25 - CANVAS_Y }}>
                  {n ? <FixtureDot>{n}</FixtureDot> : null}
                </Fixture>
              ))}
            </Canvas>
          </MapBody>
        </GreenFrame>

        <PurpleFrame>
          <ParamToolbar>
            <ModeGroup>
              <ModeBtn $w={77}>EDIT</ModeBtn>
              <ModeBtn $w={49} $ml={2} $bg="#3a3734"><EyeOffIcon /></ModeBtn>
              <ModeBtn $w={78} $bg="#d8bc3c" $c="#fff">LIVE</ModeBtn>
            </ModeGroup>
            <ToolDivider $ml={25} />
            <ToolIcon $ml={19} $w={32}><DimA /></ToolIcon>
            <ToolIcon $ml={36} $w={40}><DimB /></ToolIcon>
            <ToolIcon $ml={42} $w={24}><DimC /></ToolIcon>
            <ToolDivider $ml={23} />
            <ToolIcon $ml={19} $w={38}><UndoLabel t="ALL" /></ToolIcon>
            <ToolIcon $ml={31} $w={38}><UndoLabel t="SEL" /></ToolIcon>
            <ToolDivider $ml={22} />
            <ToolIcon $ml={21} $w={36}><SaveIcon /></ToolIcon>
            <ToolIcon $ml={30} $w={40}><CameraIcon /></ToolIcon>
            <ToolIcon $ml={28} $w={40}><MixerIcon /></ToolIcon>
            <ParamLabel>Parametry</ParamLabel>
            <ViewTab $on $auto $w={240}>LIVE EDIT</ViewTab>
            <ViewTab $w={166} $pl={14}>MIXER</ViewTab>
          </ParamToolbar>
          <ParamBody>
            <ParamSide>
              {SIDE.map(([t, dot, on]) => (
                <SideItem key={t} $on={on}>{t}{dot ? <SideDot /> : null}</SideItem>
              ))}
            </ParamSide>
            <ParamMain>
              <FixtureName>COLORSPOT 250_AT MODE3</FixtureName>
              <Channels>
                {CHANNELS.map(c => <ParamChannel key={c.n || 'next'} c={c} />)}
              </Channels>
              <HScroll><HThumb /></HScroll>
            </ParamMain>
          </ParamBody>
        </PurpleFrame>
        <SideGutter />
      </BottomRow>

      <RingMark $x={1179} $y={989} $w={122} $h={116} />
      <RingMark $x={1319} $y={1323} $w={108} $h={127} />
      <Tooltip>Dim/ShutReset</Tooltip>
    </Page>
  );
}
